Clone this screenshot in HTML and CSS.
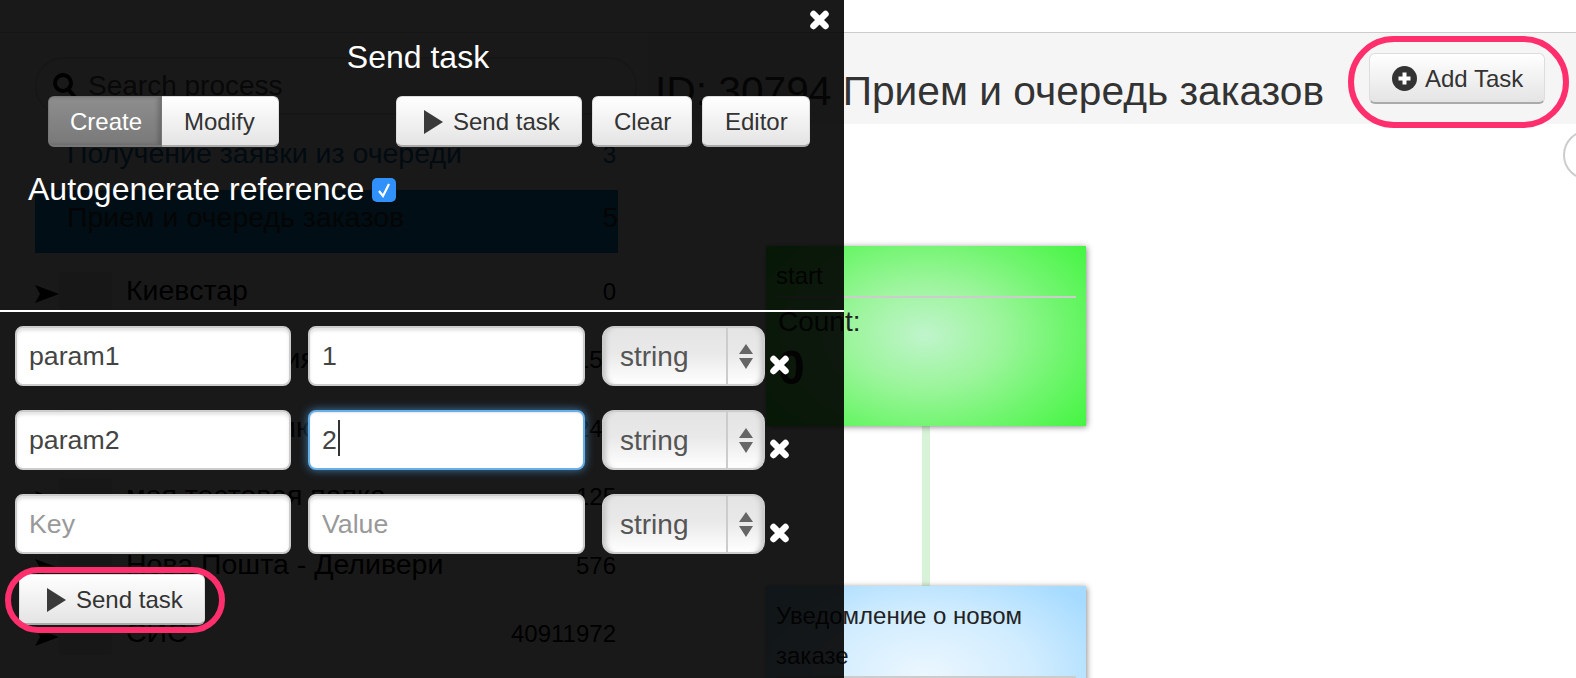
FILE: index.html
```html
<!DOCTYPE html>
<html>
	<head>
		<meta charset="UTF-8">
		<title>Send task</title>
		<link rel="stylesheet" href="styles.css">
	</head>
	<body>
		<svg class="defs" width="0" height="0">
			<symbol id="i-close" viewBox="0 0 21 20">
				<path d="M4.5 4L16.5 16M16.5 4L4.5 16" fill="none" stroke="#fff" stroke-width="6.5" stroke-linecap="round"/>
			</symbol>
			<symbol id="i-play" viewBox="0 0 19 24">
				<path d="M0 0L19 12L0 24Z" fill="#3a3a3a"/>
			</symbol>
			<symbol id="i-send" viewBox="0 0 24 18">
				<path d="M0 0L24 9L0 18L5 9Z" fill="#000"/>
			</symbol>
		</svg>

		<!-- page under the dialog -->
		<div class="topbar"></div>
		<div class="page">
			<div class="sidebar">
				<div class="search">
					<svg class="search-icon" width="24" height="26" viewBox="0 0 24 26"><circle cx="10" cy="10" r="8" fill="none" stroke="#000" stroke-width="4"/><path d="M15 16L22 24" stroke="#000" stroke-width="4"/></svg>
					<span>Search process</span>
				</div>
				<div class="proc">
					<span class="proc-name">Получение заявки из очереди</span><span class="proc-num">3</span>
				</div>
				<div class="proc proc-selected">
					<span class="proc-name">Прием и очередь заказов</span><span class="proc-num">5</span>
				</div>
				<div class="proc proc-folder">
					<svg class="proc-arrow" width="24" height="18"><use href="#i-send"/></svg><span class="proc-box"></span>
					<span class="proc-name">Киевстар</span><span class="proc-num">0</span>
				</div>
				<div class="proc proc-folder">
					<svg class="proc-arrow" width="24" height="18"><use href="#i-send"/></svg><span class="proc-box"></span>
					<span class="proc-name">Моя компания</span><span class="proc-num">155</span>
				</div>
				<div class="proc proc-folder">
					<svg class="proc-arrow" width="24" height="18"><use href="#i-send"/></svg><span class="proc-box"></span>
					<span class="proc-name">Заказ в линию</span><span class="proc-num">246</span>
				</div>
				<div class="proc proc-folder">
					<svg class="proc-arrow" width="24" height="18"><use href="#i-send"/></svg><span class="proc-box"></span>
					<span class="proc-name">моя тестовая папка</span><span class="proc-num">125</span>
				</div>
				<div class="proc proc-folder">
					<svg class="proc-arrow" width="24" height="18"><use href="#i-send"/></svg><span class="proc-box"></span>
					<span class="proc-name">Нова Пошта - Деливери</span><span class="proc-num">576</span>
				</div>
				<div class="proc proc-folder">
					<svg class="proc-arrow" width="24" height="18"><use href="#i-send"/></svg><span class="proc-box"></span>
					<span class="proc-name">СИС</span><span class="proc-num">40911972</span>
				</div>
			</div>
			<div class="main">
				<div class="head">
					<h1 class="head-title">ID: 30794 Прием и очередь заказов</h1>
					<a class="btn btn-add">
						<svg width="25" height="25" viewBox="0 0 25 25"><circle cx="12.5" cy="12.5" r="12.5" fill="#333"/><path d="M12.5 6.5V18.5M6.5 12.5H18.5" stroke="#fff" stroke-width="4"/></svg>
						Add Task
					</a>
				</div>
				<div class="canvas">
					<span class="zoom-round"></span>
					<div class="link"></div>
					<div class="node node-start">
						<div class="node-title">start</div>
						<div class="node-count">Count:</div>
						<div class="node-num">0</div>
					</div>
					<div class="node node-notify">
						<div class="node-title">Уведомление о новом заказе</div>
					</div>
				</div>
			</div>
		</div>

		<!-- send task dialog -->
		<div class="dialog">
			<a class="close close-top"><svg width="21" height="20"><use href="#i-close"/></svg></a>
			<h2 class="dialog-title">Send task</h2>
			<div class="toolbar">
				<div class="btn-group">
					<a class="btn btn-on">Create</a><a class="btn btn-modify">Modify</a>
				</div>
				<div class="btn-row">
					<a class="btn btn-send"><svg width="19" height="24"><use href="#i-play"/></svg>Send task</a>
					<a class="btn btn-clear">Clear</a>
					<a class="btn btn-editor">Editor</a>
				</div>
			</div>
			<label class="auto">Autogenerate reference
				<span class="check"><svg width="14" height="16" viewBox="0 0 14 16"><path d="M2 9L6 14L12 2" fill="none" stroke="#fff" stroke-width="2.2"/></svg></span>
			</label>
			<div class="rule"></div>
			<div class="params">
				<div class="param">
					<input class="field" type="text" value="param1">
					<input class="field field-val" type="text" value="1">
					<div class="type"><select><option>string</option></select><span class="type-arrows"><svg width="14" height="25" viewBox="0 0 14 25"><path d="M7 0L14 10H0ZM0 14H14L7 25Z" fill="#666"/></svg></span></div>
					<a class="close"><svg width="21" height="20"><use href="#i-close"/></svg></a>
				</div>
				<div class="param">
					<input class="field" type="text" value="param2">
					<div class="focus-wrap"><input class="field field-val field-focus" type="text" value="2"></div>
					<div class="type"><select><option>string</option></select><span class="type-arrows"><svg width="14" height="25" viewBox="0 0 14 25"><path d="M7 0L14 10H0ZM0 14H14L7 25Z" fill="#666"/></svg></span></div>
					<a class="close"><svg width="21" height="20"><use href="#i-close"/></svg></a>
				</div>
				<div class="param">
					<input class="field" type="text" placeholder="Key">
					<input class="field field-val" type="text" placeholder="Value">
					<div class="type"><select><option>string</option></select><span class="type-arrows"><svg width="14" height="25" viewBox="0 0 14 25"><path d="M7 0L14 10H0ZM0 14H14L7 25Z" fill="#666"/></svg></span></div>
					<a class="close"><svg width="21" height="20"><use href="#i-close"/></svg></a>
				</div>
			</div>
			<a class="btn btn-send btn-bottom"><svg width="19" height="24"><use href="#i-play"/></svg>Send task</a>
		</div>

		<!-- red marks drawn on the screenshot -->
		<span class="ring ring-add"></span>
		<span class="ring ring-send"></span>
	</body>
</html>
```
FILE: styles.css
```css
html, body{ margin: 0; height: 100%;}
body{ position: relative; width: 1576px; height: 678px; overflow: hidden; background: #fff; font-family: "Liberation Sans", Arial, sans-serif; color: #333;}
.defs{ position: absolute;}
a{ text-decoration: none;}

/* page under the dialog */
.topbar{ height: 32px; border-bottom: 1px solid #ccc;}
.page{ display: flex; height: 645px; overflow: hidden;}
.sidebar{ width: 583px; margin-right: 30px; padding-left: 35px; flex: none;}
.search{ display: flex; align-items: center; gap: 11px; box-sizing: border-box; width: 602px; height: 58px; margin-top: 24px; padding-left: 16px; border: 2px solid #ddd; border-radius: 28px; font-size: 28px; color: #555;}
.proc{ display: flex; align-items: center; height: 68px; padding-left: 32px; font-size: 28.5px; color: #0a6ea8;}
.search + .proc{ margin-top: 4px;}
.proc-num{ margin: 3px 2px 0 auto; font-size: 24px;}
.proc-selected{ box-sizing: border-box; height: 63px; margin-top: 3px; margin-bottom: 3px; padding-bottom: 8px; background: #0a8cd2; color: #333;}
.proc-selected .proc-num{ margin: 0 0 0 auto; font-size: 28px;}
.proc-folder{ height: 68.5px; padding-left: 0; color: #000;}
.proc-arrow{ flex: none; margin-top: 8px;}
.proc-box{ flex: none; width: 53px; height: 40px; margin: 4px 14px 0 0; background: #e8e8e8; border-radius: 3px;}

.main{ flex: 1; min-width: 0;}
.head{ display: flex; align-items: center; box-sizing: border-box; height: 91px; padding: 0 31px 0 7px; background: #f5f5f5;}
.head-title{ margin: 24px 0 0; font-size: 40.7px; line-height: 44px; font-weight: normal; color: #333; white-space: nowrap;}
.btn-add{ flex: none; gap: 8px; width: 176px; height: 52px; margin-left: auto; padding: 0 0 0 22px;}
.canvas{ position: relative; height: 554px; overflow: hidden;}
.zoom-round{ position: absolute; left: 915px; top: 6px; width: 50px; height: 50px; box-sizing: border-box; border: 2px solid #ccc; border-radius: 50%;}
.link{ position: absolute; left: 274px; top: 302px; width: 8px; height: 160px; background: #d8f2d8;}
.node{ position: absolute; left: 118px; width: 320px; box-sizing: border-box; padding: 10px; box-shadow: 1px 1px 6px rgba(0,0,0,.45); font-size: 24px; color: #222;}
.node-start{ top: 122px; height: 180px; background: radial-gradient(ellipse 190px 130px at 159px 89px, #c0f4cc 0, #9cf59c 40%, #6ef56c 75%, #3df53a 115%);}
.node-notify{ top: 462px; height: 180px; background: radial-gradient(ellipse 200px 120px at 159px 90px, #ecf7ff 0, #d0ecff 55%, #a6dbff 100%);}
.node-title{ line-height: 40px; border-bottom: 2px solid #ccc;}
.node-count{ margin-top: 6px; padding-left: 2px; font-size: 28px; line-height: 36px;}
.node-num{ padding-left: 2px; font-size: 48px; font-weight: bold; line-height: 56px;}

/* dialog */
.dialog{ position: absolute; left: 0; top: 0; width: 844px; height: 678px; background: rgba(0,0,0,.9); color: #fff;}
.close{ display: block; width: 21px; height: 20px; margin: 29px 0 0 4px;}
.close-top{ position: absolute; left: 805px; top: -19px;}
.dialog-title{ margin: 37px 0 0; padding-right: 8px; font-size: 32px; line-height: 40px; font-weight: normal; text-align: center;}
.toolbar{ display: flex; justify-content: space-between; margin-top: 19px; padding: 0 34px 0 48px;}
.btn{ display: inline-flex; align-items: center; box-sizing: border-box; height: 51px; padding: 1px 22px 0; background: linear-gradient(#fff, #e4e4e4); border: 1px solid #ddd; border-bottom: 2px solid #aaa; border-radius: 6px; font-size: 24px; color: #333; white-space: nowrap;}
.btn svg{ flex: none;}
.btn-group{ display: flex;}
.btn-on{ width: 114px; padding: 1px 21px 0; background: linear-gradient(#8e8e8e, #797979); border-color: #777; border-radius: 6px 0 0 6px; color: #fff; box-shadow: inset -3px 0 4px rgba(0,0,0,.2);}
.btn-modify{ width: 117px; padding: 1px 22px 0; border-left: 0; border-radius: 0 6px 6px 0;}
.btn-row{ display: flex; gap: 10px;}
.btn-send{ width: 186px; padding: 1px 0 0 27px; gap: 10px;}
.btn-clear{ width: 100px; padding: 1px 21px 0;}
.btn-editor{ width: 108px;}
.auto{ display: flex; align-items: center; gap: 8px; margin-top: 22px; padding-left: 28px; font-size: 32px; line-height: 40px;}
.check{ display: flex; align-items: center; justify-content: center; width: 24px; height: 24px; margin-top: 2px; border-radius: 5px; background: #3091fb;}
.rule{ height: 2px; margin-top: 101px; background: #fff;}
.params{ display: flex; flex-direction: column; gap: 24px; margin-top: 14px; padding-left: 15px;}
.param{ display: flex; align-items: flex-start; gap: 17px; height: 60px;}
.param .close{ margin-left: -13px;}
.field{ box-sizing: border-box; width: 276px; height: 60px; margin: 0; padding: 0 12px; background: #fff; border: 2px solid #ccc; border-radius: 8px; box-shadow: inset 0 3px 3px rgba(0,0,0,.1); font: 26.7px "Liberation Sans", Arial, sans-serif; color: #444; outline: 0;}
.field-val{ width: 277px;}
.field::placeholder{ color: #999;}
.focus-wrap{ position: relative; width: 277px; height: 60px;}
.field-focus{ border-color: #66afe9; box-shadow: 0 0 10px rgba(82,168,236,.7), inset 0 1px 2px rgba(0,0,0,.1);}
.focus-wrap:after{ content: ''; position: absolute; left: 30px; top: 10px; width: 2px; height: 36px; background: #333;}
.type{ display: flex; box-sizing: border-box; width: 163px; height: 60px; background: linear-gradient(#e4e4e4, #e9e9e9 45%, #fff); border: 2px solid #ccc; border-radius: 12px; box-shadow: inset 6px 0 5px -4px #c4c4c4, inset -6px 0 5px -4px #c4c4c4;}
.type select{ flex: 1; min-width: 0; appearance: none; -webkit-appearance: none; padding: 0 0 0 16px; background: none; border: 0; outline: 0; font: 28px "Liberation Sans", Arial, sans-serif; color: #555;}
.type-arrows{ display: flex; align-items: center; justify-content: center; flex: none; width: 35px; border-left: 2px solid #ccc;}
.btn-bottom{ margin: 20px 0 0 19px;}

/* red marks */
.ring{ position: absolute; box-sizing: border-box; border: 6px solid #ff2f6e;}
.ring-add{ left: 1348px; top: 36px; width: 221px; height: 92px; border-radius: 46px;}
.ring-send{ left: 5px; top: 567px; width: 220px; height: 66px; border-radius: 33px;}
```
